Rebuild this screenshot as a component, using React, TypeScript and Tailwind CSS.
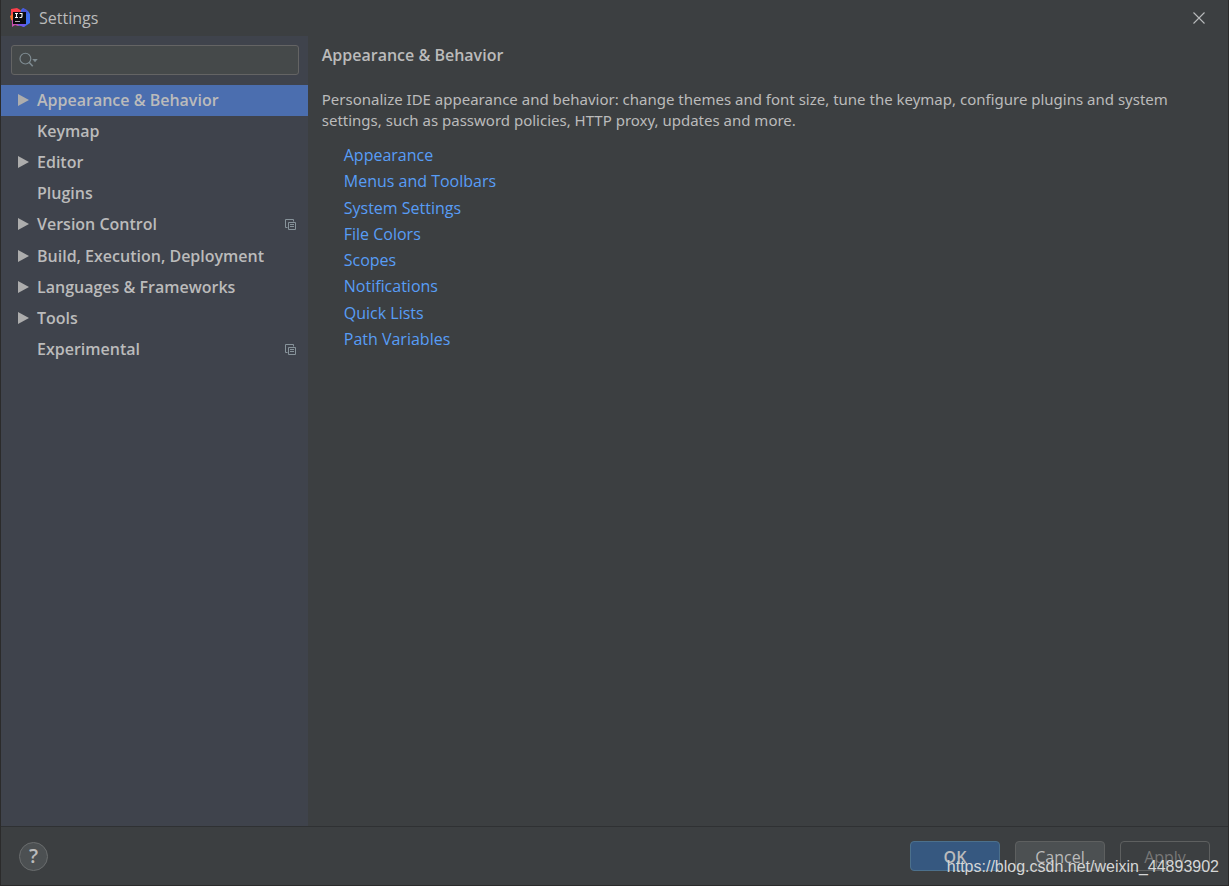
import React from 'react';

interface TreeItem {
  label: string;
  expandable?: boolean;
  projectLevel?: boolean;
  selected?: boolean;
}

const treeItems: TreeItem[] = [
  { label: 'Appearance & Behavior', expandable: true, selected: true },
  { label: 'Keymap' },
  { label: 'Editor', expandable: true },
  { label: 'Plugins' },
  { label: 'Version Control', expandable: true, projectLevel: true },
  { label: 'Build, Execution, Deployment', expandable: true },
  { label: 'Languages & Frameworks', expandable: true },
  { label: 'Tools', expandable: true },
  { label: 'Experimental', projectLevel: true },
];

const links = [
  'Appearance',
  'Menus and Toolbars',
  'System Settings',
  'File Colors',
  'Scopes',
  'Notifications',
  'Quick Lists',
  'Path Variables',
];

const AppLogo = () => (
  <svg width="20" height="20" viewBox="0 0 20 20" aria-hidden="true">
    <path d="M1 1l6-1 5 3-4 10-7-6z" fill="#fc3f4b" />
    <path d="M0 8l4-3 4 4-2 6-5-3z" fill="#f9722f" />
    <path d="M2 12l4-2 6 7-4 1-3-1-3 2z" fill="#c94fb0" />
    <path d="M11 2l2-2 5 3 2 3v9l-6 4-6-2z" fill="#3f6ef0" />
    <path d="M13 0l4 2 1 4-6-2z" fill="#4c55d8" />
    <path d="M7 16l9-1-2 4-5-2z" fill="#7355e8" />
    <path d="M3 4h13v12H3z" fill="#0b0a10" />
    <path d="M5 5.5h3M6.5 5.5v4M5 9.5h3M9.5 5.5h3M12 5v3.2q0 1.3-1.3 1.3H9.5" fill="none" stroke="#fff" strokeWidth="1.1" />
    <path d="M5 13.5h5" stroke="#a9a9a9" strokeWidth="1" />
  </svg>
);

const CloseIcon = () => (
  <svg width="12" height="12" viewBox="0 0 12 12" aria-hidden="true">
    <path d="M0.5 0.5l11 11M11.5 0.5l-11 11" stroke="#b9bbbc" strokeWidth="1.1" />
  </svg>
);

const SearchIcon = () => (
  <svg width="21" height="16" viewBox="0 0 21 16" fill="none" aria-hidden="true">
    <circle cx="7" cy="6.5" r="5.9" stroke="#7e8b91" strokeWidth="1.3" />
    <path d="M11 10.5l4 4.3" stroke="#7e8b91" strokeWidth="1.7" />
    <path d="M14.5 7h6l-3 3.5z" fill="#7e8b91" />
  </svg>
);

const ArrowIcon = () => (
  <svg width="11" height="12" viewBox="0 0 11 12" aria-hidden="true">
    <path d="M0 0l11 6-11 6z" fill="#adadad" />
  </svg>
);

const ProjectIcon = () => (
  <svg width="11" height="11" viewBox="0 0 11 11" fill="none" stroke="#87939a" aria-hidden="true">
    <path d="M2.5 8.5h-2v-8h8v2" />
    <path d="M3.5 3.5h7v7h-7z" />
    <path d="M5 5.5h4M5 7.5h4" />
  </svg>
);

const TreeRow: React.FC<TreeItem> = ({ label, expandable, projectLevel, selected }) => (
  <li className="flex">
    <button
      type="button"
      className={`flex w-full items-center pr-3 pb-[2px] pl-[17px] text-left ${selected ? 'bg-[#4b6eaf]' : ''}`}
    >
      <span className="flex w-[19px] shrink-0">{expandable && <ArrowIcon />}</span>
      <span className="flex-1 whitespace-nowrap">{label}</span>
      {projectLevel && <ProjectIcon />}
    </button>
  </li>
);

const App = () => {
  return (
    <div className="relative flex min-h-screen flex-col border border-t-0 border-[#2b2b2b] bg-[#3c3f41] font-['Open_Sans','Noto_Sans',sans-serif] text-base text-[#bbbbbb]">
      <header className="flex h-9 items-center pr-[23px] pl-[9px]">
        <AppLogo />
        <h1 className="ml-[9px] flex-1">Settings</h1>
        <button type="button" aria-label="Close">
          <CloseIcon />
        </button>
      </header>

      <div className="flex flex-1">
        <aside className="w-1/4 shrink-0 bg-[#3f434c]">
          <label className="mr-[9px] ml-[10px] mt-[9px] flex h-[30px] items-center rounded-[3px] border border-[#646464] bg-[#45494a] px-[7px]">
            <SearchIcon />
            <input type="text" aria-label="Search settings" className="ml-1 w-full min-w-0 bg-transparent outline-none" />
          </label>
          <ul className="mt-[10px] grid h-[281px] grid-rows-9 font-semibold">
            {treeItems.map((item) => (
              <TreeRow key={item.label} {...item} />
            ))}
          </ul>
        </aside>

        <main className="flex-1 px-[14px] pt-[9px]">
          <h2 className="leading-[21px] font-semibold">Appearance &amp; Behavior</h2>
          <p className="mt-[23px] font-['Noto_Sans',sans-serif] text-[15px] leading-[21px]">
            Personalize IDE appearance and behavior: change themes and font size, tune the keymap, configure plugins and
            system settings, such as password policies, HTTP proxy, updates and more.
          </p>
          <ul className="mt-[11px] grid h-[210px] grid-rows-8 items-center pl-[22px] text-[#589df6]">
            {links.map((link) => (
              <li key={link}>
                <a href="#">{link}</a>
              </li>
            ))}
          </ul>
        </main>
      </div>

      <footer className="flex h-[59px] items-center border-t border-[#2f3133] px-[18px]">
        <button
          type="button"
          aria-label="Help"
          className="h-[29px] w-[29px] rounded-full border border-[#6a6d6e] bg-[#4c5052] text-xl leading-none font-semibold"
        >
          ?
        </button>
        <div className="ml-auto flex gap-[15px]">
          <button type="button" className="h-[30px] w-[90px] rounded border border-[#4c708c] bg-[#365880] pt-[2px] font-semibold">
            OK
          </button>
          <button type="button" className="h-[30px] w-[90px] rounded border border-[#5e6060] bg-[#4c5052] pt-[2px]">
            Cancel
          </button>
          <button type="button" disabled className="h-[30px] w-[90px] rounded border border-[#5e6060] pt-[2px] text-[#777777]">
            Apply
          </button>
        </div>
      </footer>

      <span className="pointer-events-none absolute right-[9px] bottom-[6px] font-['Liberation_Sans',sans-serif] text-base text-[#d5d6d6]">
        https://blog.csdn.net/weixin_44893902
      </span>
    </div>
  );
};

export default App;
